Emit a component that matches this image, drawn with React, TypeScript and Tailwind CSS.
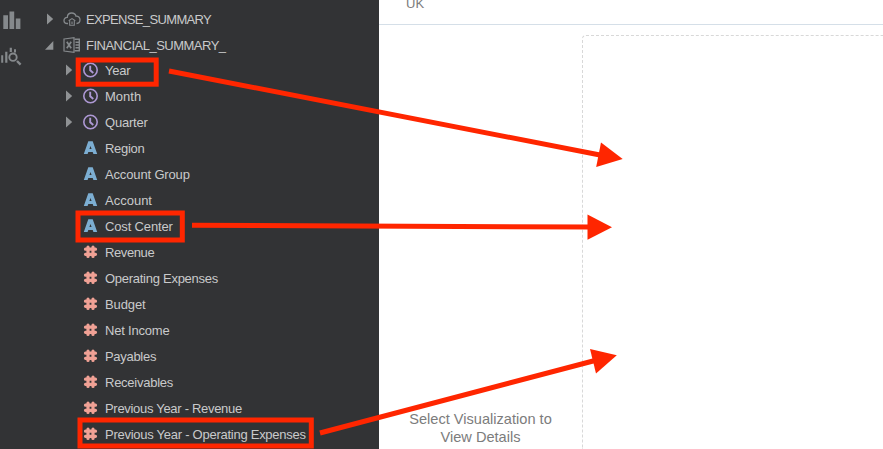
import React from "react";

type Kind = "time" | "attribute" | "measure";

const fields: { label: string; kind: Kind; tracking: string }[] = [
  { label: "Year", kind: "time", tracking: "tracking-[-0.25px]" },
  { label: "Month", kind: "time", tracking: "tracking-normal" },
  { label: "Quarter", kind: "time", tracking: "tracking-[-0.2px]" },
  { label: "Region", kind: "attribute", tracking: "tracking-[-0.3px]" },
  { label: "Account Group", kind: "attribute", tracking: "tracking-[-0.15px]" },
  { label: "Account", kind: "attribute", tracking: "tracking-normal" },
  { label: "Cost Center", kind: "attribute", tracking: "tracking-[-0.15px]" },
  { label: "Revenue", kind: "measure", tracking: "tracking-[-0.4px]" },
  { label: "Operating Expenses", kind: "measure", tracking: "tracking-[-0.27px]" },
  { label: "Budget", kind: "measure", tracking: "tracking-[-0.1px]" },
  { label: "Net Income", kind: "measure", tracking: "tracking-[-0.2px]" },
  { label: "Payables", kind: "measure", tracking: "tracking-[-0.3px]" },
  { label: "Receivables", kind: "measure", tracking: "tracking-[-0.25px]" },
  { label: "Previous Year - Revenue", kind: "measure", tracking: "tracking-[-0.3px]" },
  { label: "Previous Year - Operating Expenses", kind: "measure", tracking: "tracking-[-0.26px]" },
];

function FieldIcon({ kind }: { kind: Kind }) {
  if (kind === "time") {
    return (
      <svg className="size-4 shrink-0" viewBox="0 0 16 16" fill="none" stroke="#ad98d4" strokeWidth="1.6">
        <circle cx="8.5" cy="8" r="6.7" />
        <path d="M8.2 3.8V8.3L11.3 11" strokeWidth="1.9" />
      </svg>
    );
  }
  if (kind === "attribute") {
    return (
      <svg className="size-4 shrink-0" viewBox="0 0 16 16" fill="#7caed2">
        <path fillRule="evenodd" d="M6.3 1.3H10.7L15.2 14H11.4L10.7 12H6.3L5.6 14H1.8ZM8.5 6L7.4 9H9.6Z" />
      </svg>
    );
  }
  return (
    <svg className="size-4 shrink-0" viewBox="0 0 16 16" stroke="#f0a195" strokeWidth="3.2" strokeLinecap="round">
      <path d="M6 3.2V12.4M11 3.2V12.4M3.5 5.2H13.5M3.5 10.3H13.5" />
    </svg>
  );
}

function Caret() {
  return (
    <svg className="h-3 w-2 shrink-0" viewBox="0 0 8 12" fill="#8f9294">
      <path d="M1 .4L7.2 6L1 11.5Z" />
    </svg>
  );
}

function CloudIcon() {
  return (
    <svg className="h-4 w-[18px] shrink-0" viewBox="0 0 18 16" fill="none" stroke="#85898c" strokeWidth="1.3">
      <path d="M5 12.5H4.2C2.3 12.5 1 11.1 1 9.4C1 7.6 2.5 6.3 4.3 6.4C4.4 3.7 6.3 2 8.8 2C11 2 12.5 3.3 13 5.2C15.3 5 17 6.5 17 8.8C17 11 15.5 12.4 13.5 12.5" />
      <path d="M5.7 9.7L9 7.6L12.3 9.7M6.7 9.7V14.3H11.3V9.7M9 10.5V13" strokeWidth="1.1" />
    </svg>
  );
}

function SpreadsheetIcon() {
  return (
    <svg className="h-4 w-[18px] shrink-0" viewBox="0 0 18 16" fill="none" stroke="#85898c">
      <path d="M1 2L11 .7V15.3L1 14Z" strokeWidth="1.2" />
      <path d="M3.8 4.7L8.2 11.3M8.2 4.7L3.8 11.3" strokeWidth="1.7" />
      <path d="M11.5 2.2H16.3V13.8H11.5M12.5 5.2H16.3M12.5 8H16.3M12.5 10.8H16.3" strokeWidth="1.4" />
    </svg>
  );
}

export default function App() {
  return (
    <div className="relative flex h-[449px] w-[883px] overflow-hidden bg-white font-['Liberation_Sans',Arial,sans-serif]">
      <aside className="flex w-[379px] shrink-0 bg-[#323335] text-[13px] text-[#c9cacb]">
        <nav className="w-[46px] shrink-0 pt-[11px]">
          <svg className="ml-[3px] h-[18px] w-[18px]" viewBox="0 0 18 18" fill="#85898c">
            <path d="M.3 4.3H5V18H.3ZM6.5 .5H11.2V18H6.5ZM12.8 7.6H17.4V18H12.8Z" />
          </svg>
          <svg className="mt-[17px] h-5 w-[22px]" viewBox="0 0 22 20" fill="#85898c">
            <path d="M1.2 9.3H3.2V16.8H1.2ZM5.2 5.8H7.4V16.8H5.2ZM9.7 1.7H11.9V6H9.7ZM14 3.3H16V6.5H14Z" />
            <circle cx="13" cy="11.2" r="3.7" fill="none" stroke="#85898c" strokeWidth="1.9" />
            <path d="M17 15L20.6 18.7" stroke="#85898c" strokeWidth="2.4" />
          </svg>
        </nav>
        <div className="flex flex-col pt-[6px]">
          <div className="flex h-[26px] items-center">
            <Caret />
            <span className="ml-[9px] flex"><CloudIcon /></span>
            <span className="ml-[5px] whitespace-nowrap pt-0.5 tracking-[-0.65px]">EXPENSE_SUMMARY</span>
          </div>
          <div className="flex h-[26px] items-center">
            <svg className="-ml-px h-[9px] w-[9px]" viewBox="0 0 9 9" fill="#8f9294">
              <path d="M8.3 0V8.7H0Z" />
            </svg>
            <span className="ml-[9px] flex"><SpreadsheetIcon /></span>
            <span className="ml-[5px] whitespace-nowrap pt-0.5 tracking-[-0.5px]">FINANCIAL_SUMMARY_</span>
          </div>
          <div className="-mt-px">
            {fields.map((f) => (
              <div key={f.label} className="flex h-[26px] items-center pl-[19px]">
                <span className="flex w-[17px]">{f.kind === "time" && <Caret />}</span>
                <FieldIcon kind={f.kind} />
                <span className={"ml-[7px] whitespace-nowrap pt-0.5 " + f.tracking}>{f.label}</span>
              </div>
            ))}
          </div>
        </div>
      </aside>
      <main className="flex min-w-0 flex-1 flex-col text-[#7c7c7c]">
        <header className="h-[25px] shrink-0 border-b border-[#d5dfe8] pl-[27px] text-[13px] leading-[15px]">
          <div className="-mt-1">UK</div>
        </header>
        <div className="flex min-h-0 flex-1">
          <section className="flex w-[203px] shrink-0 flex-col justify-end pb-[3px] text-center text-[14.6px] leading-[18px]">
            <p>Select Visualization to<br />View Details</p>
          </section>
          <section className="mt-[10px] flex-1 rounded-tl-[4px] border-t border-l border-dashed border-[#d8d8d8]" />
        </div>
      </main>
      <svg className="absolute inset-0 h-[449px] w-[883px]" viewBox="0 0 883 449" fill="none" stroke="#ff2600" strokeWidth="5">
        <rect x="78.2" y="60" width="78" height="24.2" />
        <rect x="78" y="213" width="104.3" height="27" />
        <rect x="80" y="420" width="231.3" height="26" />
        <path d="M169 71L600 155M192 225.3L590 227M320 433L595 360.5" />
        <g fill="#ff2600" stroke="none">
          <path d="M601 142.5L622.7 159L596.2 167Z" />
          <path d="M587.5 214.5L612 227.3L587.5 239.7Z" />
          <path d="M590 349L616.8 355.2L596 373.5Z" />
        </g>
      </svg>
    </div>
  );
}
